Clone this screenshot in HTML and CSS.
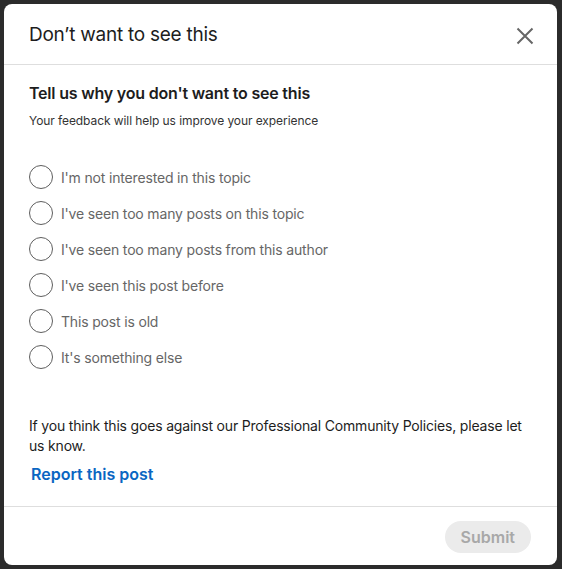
FILE: index.html
```html
<!DOCTYPE html>
<html>
<head>
	<title>Don't want to see this</title>
	<link rel="stylesheet" href="styles.css">
</head>
<body>
	<div class="modal">
		<div class="modalHeader">
			<h1>Don’t want to see this</h1>
			<button class="close" aria-label="Dismiss">
				<svg width="24" height="24" viewBox="0 0 24 24"><path d="M4.5 4.5l15 15M19.5 4.5l-15 15" stroke="#666" stroke-width="2" fill="none"/></svg>
			</button>
		</div>

		<div class="modalContent">
			<h2>Tell us why you don't want to see this</h2>
			<p class="sub">Your feedback will help us improve your experience</p>

			<ul class="options">
				<li><span class="radio"></span>I'm not interested in this topic</li>
				<li><span class="radio"></span>I've seen too many posts on this topic</li>
				<li><span class="radio"></span>I've seen too many posts from this author</li>
				<li><span class="radio"></span>I've seen this post before</li>
				<li><span class="radio"></span>This post is old</li>
				<li><span class="radio"></span>It's something else</li>
			</ul>

			<p class="policy">If you think this goes against our Professional Community Policies, please let us know.</p>
			<a class="report" href="#">Report this post</a>
		</div>

		<div class="modalFooter">
			<button class="submit" disabled>Submit</button>
		</div>
	</div>
</body>
</html>
```

FILE: styles.css
```css
*{
	margin: 0;
	padding: 0;
	box-sizing: border-box;
}

body{
	height: 569px;
	padding: 4px 5px 4px 4px;
	background-color: #2b2b2b;
	font-family: Inter, "Open Sans", Arial, sans-serif;
	color: #191919;
}

.modal{
	display: flex;
	flex-direction: column;
	height: 561px;
	background-color: #fff;
	border-radius: 8px;
	overflow: hidden;
}

.modalHeader{
	display: flex;
	align-items: center;
	justify-content: space-between;
	height: 61px;
	padding: 0 20px 0 25px;
	border-bottom: 1px solid #dedede;
}

.modalHeader h1{
	margin-top: 2px;
	font-size: 19px;
	font-weight: normal;
	line-height: 24px;
	letter-spacing: -0.25px;
	color: #1d1d1d;
}

.close{
	display: flex;
	margin-top: 4px;
	padding: 0;
	border: none;
	background: none;
}

.modalContent{
	flex: 1;
	padding: 16px 24px 0 25px;
}

.modalContent h2{
	font-size: 16px;
	font-weight: 600;
	line-height: 24px;
	letter-spacing: -0.2px;
	color: #1d1d1d;
}

.sub{
	margin-top: 8px;
	font-size: 12px;
	line-height: 16px;
	letter-spacing: -0.08px;
	color: #333;
}

.options{
	list-style: none;
	margin-top: 30px;
}

.options li{
	display: flex;
	align-items: center;
	gap: 8px;
	height: 36px;
	font-size: 14px;
	letter-spacing: -0.17px;
	color: #666;
}

.radio{
	width: 24px;
	height: 24px;
	border: 1px solid #5e5e5e;
	border-radius: 50%;
}

.policy{
	margin-top: 41px;
	font-size: 14px;
	line-height: 20px;
	letter-spacing: -0.18px;
	color: #1d1d1d;
}

.report{
	display: inline-block;
	margin-top: 8px;
	margin-left: 2px;
	font-size: 16px;
	font-weight: 600;
	line-height: 20px;
	color: #0a66c2;
	text-decoration: none;
}

.modalFooter{
	display: flex;
	justify-content: flex-end;
	padding: 14px 26px 12px 24px;
	border-top: 1px solid #dedede;
}

.submit{
	height: 32px;
	padding: 0 16px;
	border: none;
	border-radius: 16px;
	background-color: #ebebeb;
	font: 600 16px Inter, "Open Sans", Arial, sans-serif;
	color: #a8a8a8;
}
```
